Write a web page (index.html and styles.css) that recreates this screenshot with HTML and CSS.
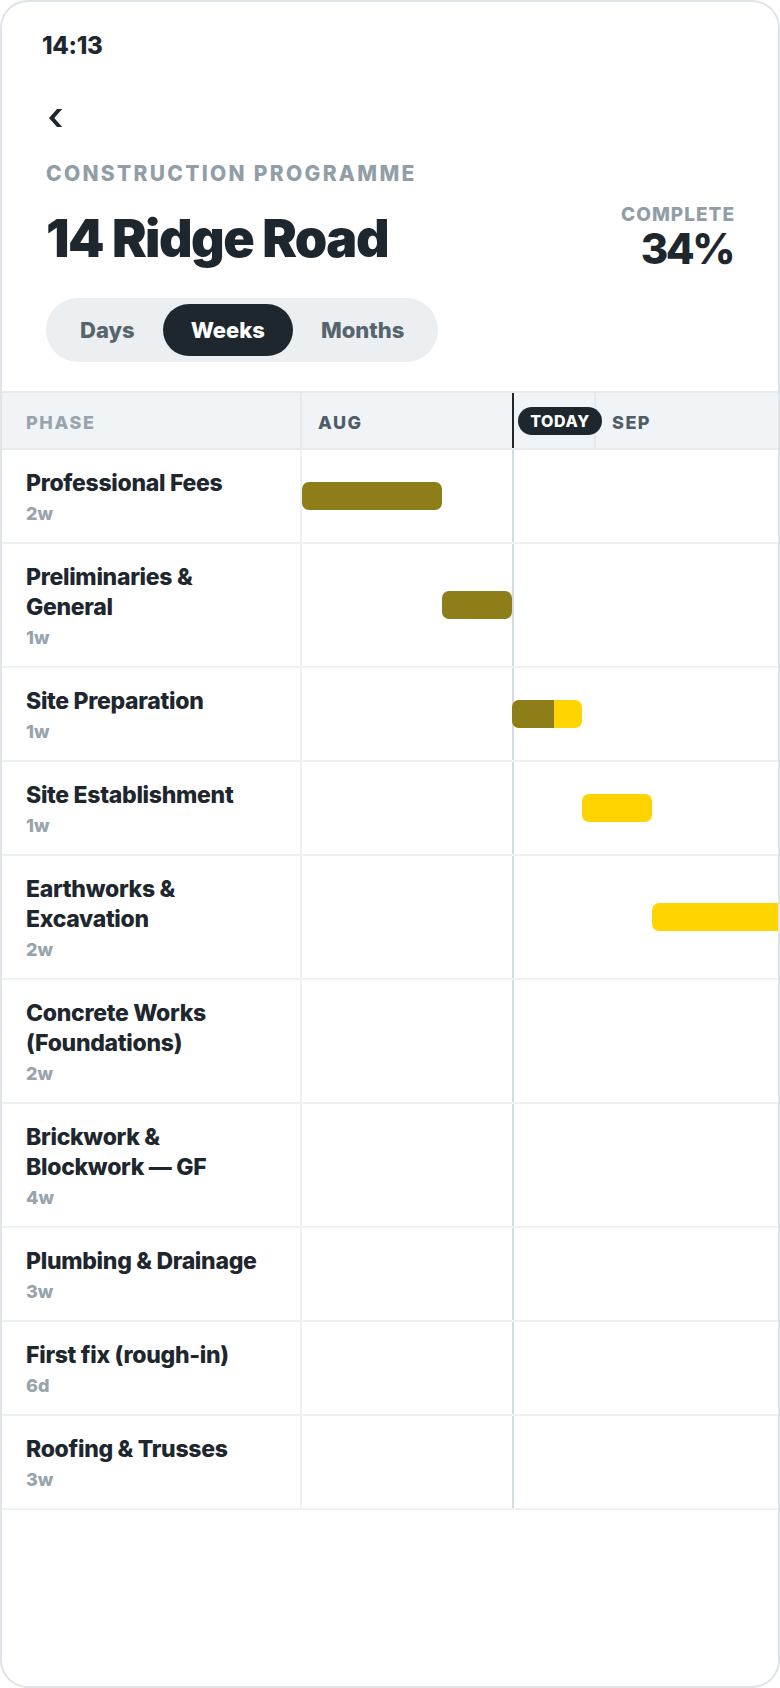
FILE: index.html
```html
<!DOCTYPE html>
<html lang="en">
<head>
<meta charset="utf-8">
<title>14 Ridge Road — Construction Programme</title>
<link rel="stylesheet" href="styles.css">
</head>
<body>
<div class="device">
  <div class="status">14:13</div>
  <header class="head">
    <button class="back" aria-label="Back">
      <svg width="16" height="20" viewBox="0 0 16 20"><polygon points="10,1 15.2,1 7.3,10 15.2,19 10,19 2,10" fill="#1e272e"/></svg>
    </button>
    <div class="eyebrow">CONSTRUCTION PROGRAMME</div>
    <div class="title-row">
      <h1 class="title">14 Ridge Road</h1>
      <div class="complete">
        <div class="complete-label">COMPLETE</div>
        <div class="complete-value">34%</div>
      </div>
    </div>
    <div class="seg">
      <button class="seg-btn">Days</button>
      <button class="seg-btn active">Weeks</button>
      <button class="seg-btn">Months</button>
    </div>
  </header>

  <section class="gantt">
    <div class="g-head">
      <div class="g-phase-h">PHASE</div>
      <div class="g-time-h">
        <div class="month aug">AUG</div>
        <div class="month sep">SEP</div>
        <div class="today-mark"></div>
        <div class="today-pill">TODAY</div>
      </div>
    </div>

    <div class="g-row">
      <div class="g-phase"><div class="name">Professional Fees</div><div class="dur">2w</div></div>
      <div class="g-time"><div class="bar done" style="margin-left:0px;width:140px"></div></div>
    </div>
    <div class="g-row">
      <div class="g-phase"><div class="name">Preliminaries &amp;<br>General</div><div class="dur">1w</div></div>
      <div class="g-time"><div class="bar done" style="margin-left:140px;width:70px"></div></div>
    </div>
    <div class="g-row">
      <div class="g-phase"><div class="name">Site Preparation</div><div class="dur">1w</div></div>
      <div class="g-time"><div class="bar todo" style="margin-left:210px;width:70px"><span class="fill" style="width:60%"></span></div></div>
    </div>
    <div class="g-row">
      <div class="g-phase"><div class="name">Site Establishment</div><div class="dur">1w</div></div>
      <div class="g-time"><div class="bar todo" style="margin-left:280px;width:70px"></div></div>
    </div>
    <div class="g-row">
      <div class="g-phase"><div class="name">Earthworks &amp;<br>Excavation</div><div class="dur">2w</div></div>
      <div class="g-time"><div class="bar todo" style="margin-left:350px;width:140px"></div></div>
    </div>
    <div class="g-row">
      <div class="g-phase"><div class="name">Concrete Works<br>(Foundations)</div><div class="dur">2w</div></div>
      <div class="g-time"></div>
    </div>
    <div class="g-row">
      <div class="g-phase"><div class="name">Brickwork &amp;<br>Blockwork — GF</div><div class="dur">4w</div></div>
      <div class="g-time"></div>
    </div>
    <div class="g-row">
      <div class="g-phase"><div class="name">Plumbing &amp; Drainage</div><div class="dur">3w</div></div>
      <div class="g-time"></div>
    </div>
    <div class="g-row">
      <div class="g-phase"><div class="name">First fix (rough-in)</div><div class="dur">6d</div></div>
      <div class="g-time"></div>
    </div>
    <div class="g-row">
      <div class="g-phase"><div class="name">Roofing &amp; Trusses</div><div class="dur">3w</div></div>
      <div class="g-time"></div>
    </div>
  </section>
</div>
</body>
</html>
```

FILE: styles.css
```css
* { box-sizing: border-box; }
html, body { margin: 0; padding: 0; background: #ffffff; }
body {
  font-family: Inter, "Noto Sans", "Liberation Sans", sans-serif;
  color: #1e272e;
}
.device {
  width: 780px;
  height: 1688px;
  border: 2px solid #dfe4e8;
  border-radius: 28px;
  overflow: hidden;
  background: #fff;
}
.status {
  padding: 30px 40px 0;
  font-size: 24px;
  line-height: 28px;
  font-weight: 800;
  letter-spacing: -0.3px;
}
.head {
  padding: 0 44px 0 44px;
}
.back {
  display: block;
  margin: 48px 0 0 1px;
  padding: 0;
  border: 0;
  background: none;
  width: 16px;
  height: 20px;
}
.back svg { display: block; }
.eyebrow {
  margin-top: 33px;
  font-size: 21px;
  line-height: 26px;
  font-weight: 800;
  letter-spacing: 2.3px;
  color: #919ea7;
}
.title-row {
  margin-top: 17px;
  display: flex;
  justify-content: space-between;
  align-items: flex-end;
}
.title {
  margin: 0 0 2px;
  font-size: 52px;
  line-height: 58px;
  font-weight: 900;
  letter-spacing: -1.5px;
}
.complete { text-align: right; }
.complete-label {
  font-size: 19px;
  line-height: 22px;
  font-weight: 800;
  letter-spacing: 1px;
  color: #919ea7;
  margin-right: -1px;
}
.complete-value {
  padding-top: 2px;
  font-size: 42px;
  line-height: 42px;
  font-weight: 800;
  letter-spacing: -2.5px;
  margin-right: 1px;
}
.seg {
  margin-top: 28px;
  display: inline-flex;
  padding: 6px;
  background: #eceff2;
  border-radius: 32px;
}
.seg-btn {
  border: 0;
  background: transparent;
  height: 52px;
  padding: 0 28px;
  border-radius: 26px;
  font-family: inherit;
  font-size: 22px;
  font-weight: 800;
  letter-spacing: 0;
  color: #56646e;
}
.seg-btn.active {
  background: #1e272e;
  color: #ffffff;
}

.gantt { margin-top: 29px; }
.g-head {
  display: flex;
  height: 59px;
  border-top: 2px solid #e6eaed;
  border-bottom: 2px solid #e6eaed;
  background: #f1f4f6;
}
.g-phase-h {
  width: 300px;
  flex: none;
  border-right: 2px solid #e6eaed;
  padding: 3px 0 0 24px;
  display: flex;
  align-items: center;
  font-size: 18px;
  font-weight: 800;
  letter-spacing: 1.6px;
  color: #98a4ad;
}
.g-time-h {
  flex: 1;
  display: flex;
  position: relative;
}
.month {
  display: flex;
  align-items: center;
  padding: 3px 0 0 16px;
  font-size: 18px;
  font-weight: 800;
  letter-spacing: 1.5px;
  color: #4f5d68;
}
.month.aug {
  width: 294px;
  flex: none;
  border-right: 2px solid #e6eaed;
}
.today-mark {
  position: absolute;
  left: 210px;
  top: 0;
  bottom: 0;
  width: 2px;
  background: #1e272e;
}
.today-pill {
  position: absolute;
  left: 216px;
  top: 14px;
  height: 28px;
  width: 84px;
  border-radius: 14px;
  background: #1e272e;
  color: #fff;
  font-size: 16px;
  line-height: 28px;
  font-weight: 800;
  letter-spacing: 0.6px;
  text-align: center;
}

.g-row {
  display: flex;
  border-bottom: 2px solid #eef1f3;
}
.g-phase {
  width: 300px;
  flex: none;
  border-right: 2px solid #eef1f3;
  padding: 18px 10px 17px 24px;
}
.name {
  font-size: 23px;
  line-height: 30px;
  font-weight: 800;
  letter-spacing: -0.3px;
  color: #1e272e;
}
.dur {
  margin-top: 5px;
  font-size: 18px;
  line-height: 22px;
  font-weight: 800;
  color: #98a4ad;
}
.g-time {
  flex: 1;
  min-width: 0;
  overflow: hidden;
  display: flex;
  align-items: center;
  background-image: linear-gradient(#d3dce2, #d3dce2);
  background-size: 2px 100%;
  background-position: 210px 0;
  background-repeat: no-repeat;
}
.bar {
  flex: none;
  height: 28px;
  border-radius: 7px;
  overflow: hidden;
  display: flex;
}
.bar.done { background: #8d7e1a; }
.bar.todo { background: #ffd400; }
.bar .fill { display: block; height: 100%; background: #8d7e1a; }
```
